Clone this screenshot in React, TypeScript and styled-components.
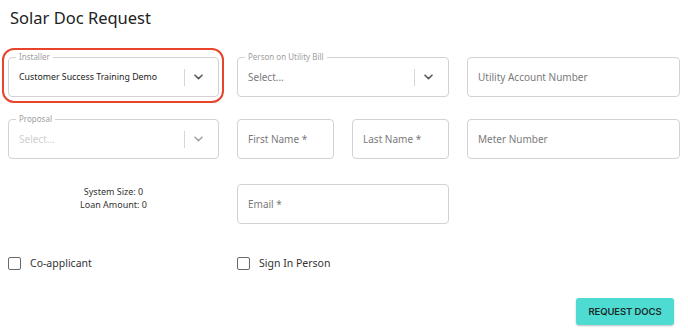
import styled, { createGlobalStyle } from "styled-components";

const GlobalStyle = createGlobalStyle`
  body {
    margin: 0;
    background: #ffffff;
    font-family: "Noto Sans", "Open Sans", sans-serif;
    color: #333333;
  }
`;

const Page = styled.div`
  width: 688px;
  height: 329px;
  box-sizing: border-box;
  padding: 8px 8px 0 8px;
  display: flex;
  flex-direction: column;
`;

const Title = styled.h1`
  margin: 0 0 0 2px;
  font-size: 16.5px;
  line-height: 20px;
  font-weight: 400;
  color: #222222;
`;

const Row = styled.div<{ $top: number }>`
  display: flex;
  gap: 18px;
  margin-top: ${({ $top }) => $top}px;
`;

const Column = styled.div<{ $width?: number }>`
  width: ${({ $width }) => $width ?? 212}px;
  display: flex;
  gap: 18px;
`;

const Field = styled.div<{ $highlight?: boolean }>`
  position: relative;
  flex: 1;
  height: 40px;
  box-sizing: border-box;
  border: 1px solid #d2d2d2;
  border-radius: 4px;
  display: flex;
  align-items: center;
  padding-left: 10px;
  background: #ffffff;

  ${({ $highlight }) =>
    $highlight &&
    `
    &::after {
      content: "";
      position: absolute;
      top: -10px;
      left: -7px;
      right: -6px;
      bottom: -7px;
      border: 2px solid #e8432b;
      border-radius: 12px;
      pointer-events: none;
    }
  `}
`;

const Legend = styled.span`
  position: absolute;
  top: -6px;
  left: 7px;
  padding: 0 3px;
  background: #ffffff;
  font-size: 8px;
  line-height: 10px;
  color: #a0a0a0;
`;

const Value = styled.span<{ $tone?: "value" | "placeholder" | "disabled" }>`
  flex: 1;
  font-size: ${({ $tone }) => ($tone === "value" ? 8.8 : 10)}px;
  color: ${({ $tone }) =>
    $tone === "disabled" ? "#cfcfcf" : $tone === "placeholder" ? "#7a7a7a" : "#222222"};
  white-space: nowrap;
  overflow: hidden;
`;

const Indicator = styled.div`
  display: flex;
  align-items: center;
  height: 100%;
`;

const Separator = styled.span`
  width: 1px;
  height: 17px;
  background: #d6d6d6;
`;

const Chevron = styled.div<{ $muted?: boolean }>`
  width: 27px;
  padding-right: 6px;
  display: flex;
  justify-content: center;
  color: ${({ $muted }) => ($muted ? "#a8a8a8" : "#5a5a5a")};
`;

const Info = styled.div`
  width: 211px;
  padding-top: 1px;
  text-align: center;
  font-size: 9px;
  line-height: 13px;
  color: #333333;
`;

const CheckRow = styled.div`
  display: flex;
  gap: 18px;
  margin-top: 32px;
`;

const CheckItem = styled.label<{ $width?: number }>`
  width: ${({ $width }) => $width ?? 212}px;
  display: flex;
  align-items: center;
  gap: 9px;
  font-size: 10.5px;
  color: #333333;
`;

const Box = styled.span`
  width: 13px;
  height: 13px;
  box-sizing: border-box;
  border: 1.5px solid #6a6a6a;
  border-radius: 2px;
`;

const Footer = styled.div`
  display: flex;
  justify-content: flex-end;
  margin-top: 28px;
  padding-right: 6px;
`;

const RequestButton = styled.button`
  width: 98px;
  height: 27px;
  border: none;
  border-radius: 3px;
  background: #4edcd2;
  box-shadow: 0 1px 2px rgba(0, 0, 0, 0.25);
  font-family: Inter, "Noto Sans", sans-serif;
  font-size: 9.5px;
  font-weight: 600;
  color: #1c2a2a;
  letter-spacing: -0.1px;
  cursor: pointer;
`;

function ChevronIcon() {
  return (
    <svg width="9" height="6" viewBox="0 0 9 6">
      <path d="M1 1.2 L4.5 4.6 L8 1.2" fill="none" stroke="currentColor" strokeWidth="1.6" strokeLinecap="round" strokeLinejoin="round" />
    </svg>
  );
}

type SelectProps = {
  label: string;
  value: string;
  tone?: "value" | "placeholder" | "disabled";
  highlight?: boolean;
};

function SelectField({ label, value, tone = "value", highlight }: SelectProps) {
  return (
    <Field $highlight={highlight}>
      <Legend>{label}</Legend>
      <Value $tone={tone}>{value}</Value>
      <Indicator>
        <Separator />
        <Chevron $muted={tone === "disabled"}>
          <ChevronIcon />
        </Chevron>
      </Indicator>
    </Field>
  );
}

function TextField({ placeholder }: { placeholder: string }) {
  return (
    <Field>
      <Value $tone="placeholder">{placeholder}</Value>
    </Field>
  );
}

function App() {
  return (
    <Page>
      <GlobalStyle />
      <Title>Solar Doc Request</Title>
      <Row $top={29}>
        <Column $width={211}>
          <SelectField label="Installer" value="Customer Success Training Demo" highlight />
        </Column>
        <Column>
          <SelectField label="Person on Utility Bill" value="Select..." tone="placeholder" />
        </Column>
        <Column $width={213}>
          <TextField placeholder="Utility Account Number" />
        </Column>
      </Row>
      <Row $top={22}>
        <Column $width={211}>
          <SelectField label="Proposal" value="Select..." tone="disabled" />
        </Column>
        <Column>
          <TextField placeholder="First Name *" />
          <TextField placeholder="Last Name *" />
        </Column>
        <Column $width={213}>
          <TextField placeholder="Meter Number" />
        </Column>
      </Row>
      <Row $top={25}>
        <Info>
          System Size: 0
          <br />
          Loan Amount: 0
        </Info>
        <Column>
          <TextField placeholder="Email *" />
        </Column>
      </Row>
      <CheckRow>
        <CheckItem $width={211}>
          <Box />
          Co-applicant
        </CheckItem>
        <CheckItem>
          <Box />
          Sign In Person
        </CheckItem>
      </CheckRow>
      <Footer>
        <RequestButton>REQUEST DOCS</RequestButton>
      </Footer>
    </Page>
  );
}

export default App;
